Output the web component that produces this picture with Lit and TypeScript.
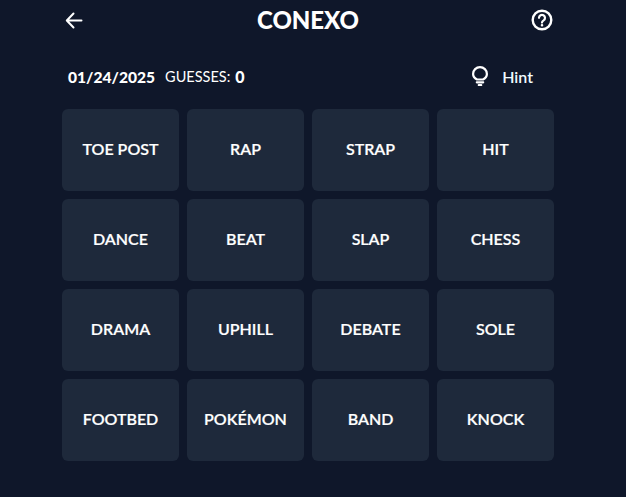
import { LitElement, html, css } from "lit";
import { customElement } from "lit/decorators.js";

const WORDS = ["TOE POST","RAP","STRAP","HIT","DANCE","BEAT","SLAP","CHESS","DRAMA","UPHILL","DEBATE","SOLE","FOOTBED","POKÉMON","BAND","KNOCK"];

@customElement("app-root")
export class AppRoot extends LitElement {
  static styles = css`
    :host { display: block; height: 497px; background: #0f172a; color: #fff; font-family: "Lato", "Noto Sans", sans-serif; overflow: hidden; }
    .page { width: 492px; margin-left: 62px; }
    .top { height: 40px; display: grid; grid-template-columns: 1fr auto 1fr; align-items: center; }
    .back { display: flex; padding-left: 2px; }
    .title { font-size: 24px; font-weight: 900; line-height: 40px; letter-spacing: -0.1px; }
    .help { display: flex; justify-content: flex-end; padding-right: 1px; }
    .info { height: 69px; display: flex; align-items: center; padding-left: 6px; padding-top: 4px; box-sizing: border-box; }
    .date { font-size: 15.6px; font-weight: 900; }
    .label { font-size: 14.5px; margin-left: 10px; }
    .count { font-size: 16px; font-weight: 900; margin-left: 5px; }
    .hint { margin-left: auto; margin-right: 21px; display: flex; align-items: center; gap: 14px; font-size: 16px; font-weight: 600; color: #f0fbff; }
    .hint svg { margin-top: -1px; margin-left: 1px; }
    .grid { display: grid; grid-template-columns: repeat(4, 117px); grid-auto-rows: 82px; gap: 8px; }
    .tile { background: #1e293b; border-radius: 6px; display: flex; align-items: center; justify-content: center; font-size: 16px; font-weight: 600; padding-bottom: 3px; box-sizing: border-box; -webkit-text-stroke: 0.2px #fff; }
    svg { display: block; }
  `;
  render() {
    return html`<div class="page">
      <div class="top">
        <div class="back"><svg width="20" height="20" viewBox="0 0 20 20" fill="none" stroke="#fff" stroke-width="2" stroke-linecap="round" stroke-linejoin="round"><path d="M17.5 10.5H3M9.5 3.5 2.8 10.5l6.7 7"/></svg></div>
        <div class="title">CONEXO</div>
        <div class="help"><svg width="22" height="22" viewBox="0 0 22 22" fill="none" stroke="#fff" stroke-width="2.400" stroke-linecap="round"><circle cx="11" cy="11" r="9.300"/><path d="M8 8.800a3 3 0 1 1 4.600 2.600c-1 .6-1.600 1.200-1.600 2.200" stroke-width="2.200"/><circle cx="11" cy="16.300" r=".6" fill="#fff" stroke-width="1.400"/></svg></div>
      </div>
      <div class="info">
        <span class="date">01/24/2025</span><span class="label">GUESSES:</span><span class="count">0</span>
        <div class="hint"><svg width="16" height="20" viewBox="0 0 16 20" fill="none" stroke="#fff" stroke-width="2.200" stroke-linecap="round"><path d="M5 13.500C2.600 12.200 1.100 10.300 1.100 8a6.900 6.900 0 0 1 13.800 0c0 2.300-1.500 4.200-3.900 5.500Z"/><path d="M4.800 16.300h6.400M6.800 19h2.400"/></svg><span>Hint</span></div>
      </div>
      <div class="grid">${WORDS.map((w) => html`<div class="tile">${w}</div>`)}</div>
    </div>`;
  }
}
